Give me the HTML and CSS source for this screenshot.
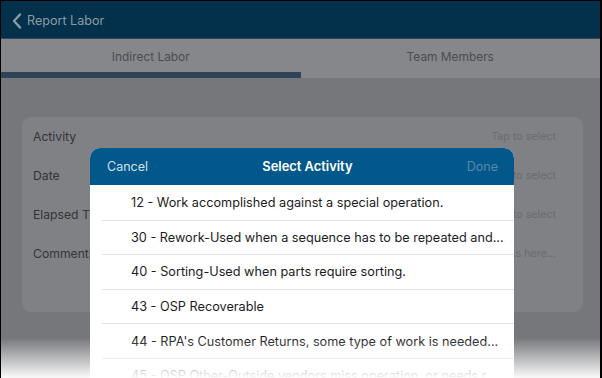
FILE: index.html
```html
<!DOCTYPE html>
<html>
<head>
<meta charset="utf-8">
<link rel="stylesheet" href="styles.css">
</head>
<body>
<div class="screen">
  <header class="nav">
    <svg class="chev" width="10" height="16" viewBox="0 0 10 16"><path d="M8 1.5 L2 8 L8 14.5" fill="none" stroke="#8b9aa6" stroke-width="2.4" stroke-linecap="round" stroke-linejoin="round"/></svg>
    <span class="nav-title">Report Labor</span>
  </header>
  <div class="tabs">
    <div class="tab active">Indirect Labor</div>
    <div class="tab">Team Members</div>
  </div>
  <main class="content">
    <section class="card">
      <div class="row"><span class="label">Activity</span><span class="hint">Tap to select</span></div>
      <div class="row"><span class="label">Date</span><span class="hint">Tap to select</span></div>
      <div class="row"><span class="label">Elapsed Time</span><span class="hint">Tap to select</span></div>
      <div class="row"><span class="label">Comments</span><span class="hint">Add comments here...</span></div>
    </section>
  </main>
  <div class="modal">
    <div class="modal-head">
      <span class="cancel">Cancel</span>
      <span class="modal-title">Select Activity</span>
      <span class="done">Done</span>
    </div>
    <ul class="list">
      <li>12 - Work accomplished against a special operation.</li>
      <li>30 - Rework-Used when a sequence has to be repeated and...</li>
      <li>40 - Sorting-Used when parts require sorting.</li>
      <li>43 - OSP Recoverable</li>
      <li>44 - RPA's Customer Returns, some type of work is needed...</li>
      <li>45 - OSP Other-Outside vendors miss operation, or needs r...</li>
    </ul>
  </div>
  <div class="fade"></div>
</div>
</body>
</html>
```
FILE: styles.css
```css
html, body {
  margin: 0;
  padding: 0;
  background: #000;
}
body {
  font-family: Inter, "Noto Sans", sans-serif;
  -webkit-font-smoothing: antialiased;
}
.screen {
  position: relative;
  margin: 1px 2px 0 1px;
  height: 377px;
  overflow: hidden;
  background: #76777b;
}
.nav {
  height: 38px;
  box-sizing: border-box;
  padding-top: 2px;
  background: #03304b;
  border-bottom: 1px solid #33495a;
  display: flex;
  align-items: center;
  padding-left: 11px;
  gap: 5px;
}
.chev { display: block; }
.nav-title {
  color: #8b9aa6;
  font-size: 12.6px;
}
.tabs {
  display: flex;
  height: 39px;
  background: #86878b;
}
.tab {
  flex: 1;
  display: flex;
  align-items: center;
  justify-content: center;
  padding-top: 2px;
  box-sizing: border-box;
  color: #4b4c50;
  font-size: 11.9px;
  border-bottom: 6px solid transparent;
}
.tab.active {
  border-bottom-color: #2f4557;
}
.content {
  padding: 39px 17px 0 21px;
}
.card {
  background: #808185;
  border-radius: 9px;
  height: 195px;
  padding: 0 27px 0 11px;
  box-sizing: border-box;
}
.row {
  height: 39px;
  display: flex;
  align-items: center;
  justify-content: space-between;
}
.label {
  color: #333438;
  font-size: 12.2px;
}
.hint {
  color: #6a6b6f;
  font-size: 10.7px;
}
.modal {
  position: absolute;
  left: 89px;
  top: 147px;
  width: 424px;
  background: #fff;
  border-radius: 10px 10px 0 0;
  overflow: hidden;
}
.modal-head {
  height: 37px;
  background: #02588a;
  display: flex;
  align-items: center;
  justify-content: space-between;
  padding: 0 16px 0 17px;
  font-size: 12.5px;
}
.cancel { color: #d3e0ea; }
.modal-title { color: #fff; font-weight: 600; font-size: 12.9px; }
.done { color: #5a88aa; }
.list {
  list-style: none;
  margin: 0;
  padding: 0;
}
.list li {
  height: 33.6px;
  display: flex;
  align-items: center;
  margin-left: 12px;
  padding-left: 29px;
  border-bottom: 1px solid #e2e2e4;
  color: #1c1c1e;
  font-size: 12.7px;
  white-space: nowrap;
}
.list li:first-child {
  padding-top: 1px;
}
.fade {
  position: absolute;
  left: 0;
  right: 0;
  bottom: 0;
  height: 40px;
  background: linear-gradient(to bottom, rgba(255,255,255,0), rgba(255,255,255,0.97));
}
```
